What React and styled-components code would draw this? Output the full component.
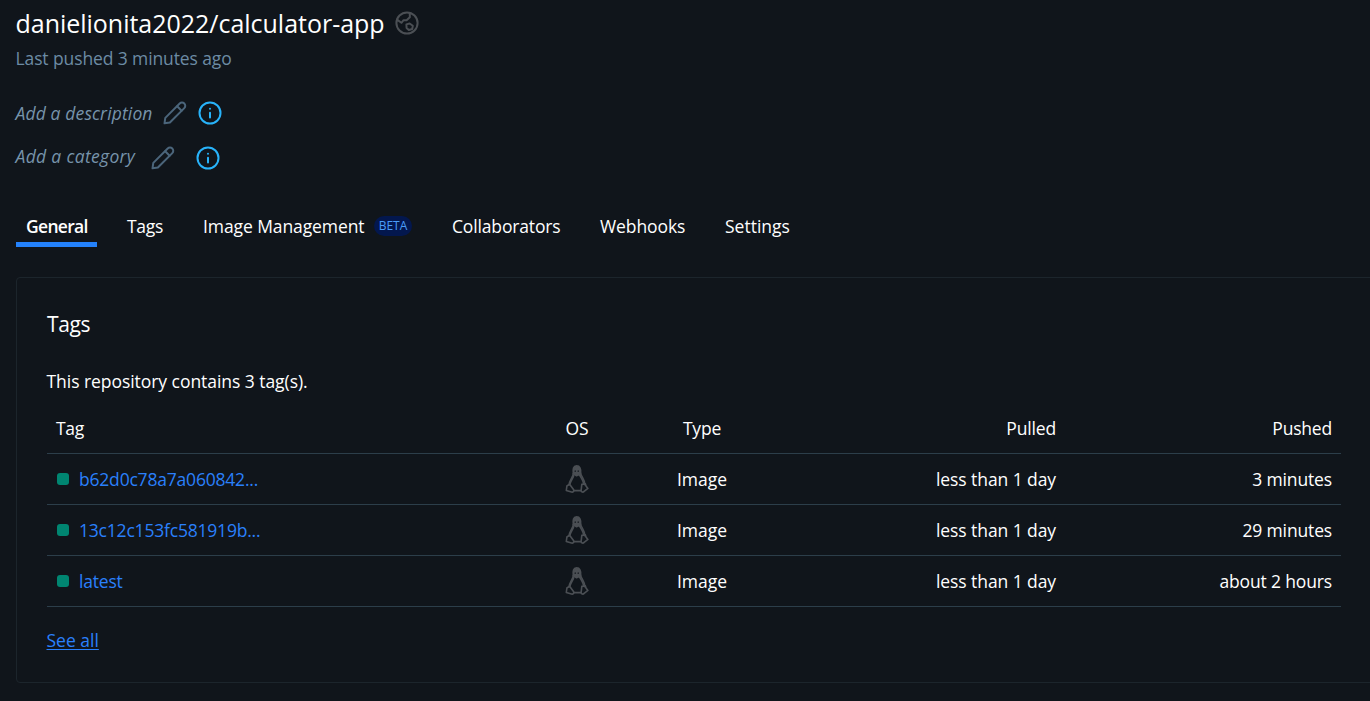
import React from 'react';
import styled, { createGlobalStyle } from 'styled-components';

const GlobalStyle = createGlobalStyle`
  * { box-sizing: border-box; }
  html, body { margin: 0; background: #10151b; overflow: hidden; }
  body {
    font-family: "Open Sans", "Noto Sans", sans-serif;
    font-size: 17.5px;
    line-height: 24px;
    color: #fff;
  }
`;

const Page = styled.main`
  width: 1370px;
  height: 701px;
  padding-left: 16px;
  overflow: hidden;
`;

const Text = styled.span`
  letter-spacing: ${({ $track }) => $track || 0}px;
  white-space: nowrap;
`;

const TitleRow = styled.header`
  display: flex;
  align-items: center;
  gap: 10.5px;
  height: 45px;
`;

const Title = styled.h1`
  margin: 0 0 0 -0.5px;
  font-size: 25px;
  line-height: 34px;
  font-weight: 400;
  letter-spacing: -0.02px;
`;

const Pushed = styled.p`
  margin: 0 0 0 -0.5px;
  height: 26px;
  line-height: 26px;
  color: #6c8ba4;
  letter-spacing: -0.11px;
`;

const Field = styled.div`
  display: flex;
  align-items: center;
  height: ${({ $height }) => $height}px;
  margin-top: ${({ $top }) => $top || 0}px;
  color: #7794ab;
`;

const FieldLabel = styled.em`
  width: ${({ $width }) => $width}px;
  margin: ${({ $lift }) => ($lift ? '0 0 4px' : '1px 0 0')} -0.5px;
  letter-spacing: ${({ $track }) => $track}px;
  white-space: nowrap;
`;

const Icon = styled.svg`
  display: block;
  flex: none;
  width: 24px;
  height: 24px;
  margin-right: ${({ $after }) => $after || 0}px;
  fill: none;
  stroke: ${({ $color }) => $color};
  stroke-width: 2;
  stroke-linecap: round;
  stroke-linejoin: round;
`;

const Tabs = styled.nav`
  display: flex;
  gap: 20px;
  height: 40px;
  margin-top: 27px;
`;

const Tab = styled.a`
  display: flex;
  align-items: center;
  width: ${({ $width }) => $width}px;
  padding: 3px 0 0 10px;
  border-bottom: 5px solid ${({ $active }) => ($active ? '#2482fc' : 'transparent')};
  font-weight: ${({ $active }) => ($active ? 600 : 400)};
`;

const Badge = styled.span`
  display: flex;
  align-items: center;
  justify-content: center;
  width: 38px;
  height: 20px;
  margin: 0 10px 0 auto;
  border-radius: 10px;
  background: #03174e;
  color: #4a9df8;
  font-size: 12px;
  line-height: 20px;
`;

const Panel = styled.section`
  width: 1400px;
  height: 406px;
  margin-top: 30px;
  padding: 30px 30px 0;
  border: 1px solid #1c252c;
  border-radius: 4px;
`;

const PanelTitle = styled.h2`
  margin: 0;
  font-size: 21px;
  line-height: 32px;
  font-weight: 400;
  letter-spacing: -0.4px;
`;

const Summary = styled.p`
  margin: 29px 0 0 -0.5px;
  letter-spacing: -0.05px;
`;

const Table = styled.div`
  width: 1294px;
  margin-top: 10px;
`;

const Row = styled.div`
  display: grid;
  grid-template-columns: 499px 62px 188px 269px 276px;
  align-items: center;
  height: 51px;
  border-bottom: 1px solid #2c3e4a;
`;

const Cell = styled.div`
  display: flex;
  align-items: center;
  justify-content: ${({ $align }) => $align || 'flex-start'};
  padding: 0 9px;
`;

const Status = styled.i`
  width: 12px;
  height: 12px;
  margin: 0 10px 1px 1px;
  border-radius: 3px;
  background: #008571;
`;

const TagLink = styled.a`
  color: #2a80fb;
  letter-spacing: -0.2px;
`;

const SeeAll = styled.a`
  display: inline-block;
  margin: 21px 0 0 -0.5px;
  color: #2a80fb;
  text-decoration: underline;
  text-underline-offset: 2px;
`;

const TuxIcon = styled(Icon)`
  height: 28px;
  margin-bottom: 1px;
  stroke-width: 1.6;
`;

const Globe = () => (
  <Icon viewBox="0 0 24 24" $color="#4b4f54">
    <circle cx="12" cy="12" r="10.6" />
    <path d="M2 8.600l4.400 3.200 2.200-2.600h3l3.200-3V2.200" />
    <path d="M11.400 13.400l3.200-.9 3.200 2.300-.6 3.200-3.400 1-2.200-2z" />
  </Icon>
);

const Pencil = ({ after }) => (
  <Icon viewBox="0 0 24 24" $color="#4b657b" $after={after}>
    <path d="M1.500 22.300l.8-5.400L16.700 2.500a3.150 3.150 0 0 1 4.600 4.600L6.900 21.500z" />
    <path d="M14.200 5.300l4.400 4.400" />
  </Icon>
);

const Info = () => (
  <Icon viewBox="0 0 24 24" $color="#28b3fa">
    <circle cx="12" cy="12" r="10.500" />
    <path d="M12 11.700v4.800M12 7.700v.01" />
  </Icon>
);

const Tux = () => (
  <TuxIcon viewBox="0 0 24 28" $color="#4b4f54">
    <path
      d="M8.300 8.600C7.800 4.200 8.300.9 11.600.9s4.300 2.800 4 6.800l-.5 3-1.600-1.200-1.900 1.200-1.900-1.200z"
      fill="#4b4f54"
    />
    <path d="M8.300 8.600c0 3.300-3.700 6-4.300 11.400M15.600 8c.4 3.500 4.500 6.500 4.400 12" />
    <path d="M8.700 10.500c-.6 2.800-3.200 5.200-3.700 8.500M15 10.500c1 2.500 3.200 4.500 3.600 8" />
    <path d="M4.600 19.200l3.900 5.200c.8 1.500-.3 3-2 2.600L1.300 25.500l.6-4.500z" />
    <path d="M16.800 19.400l-.7 6.200c.3 1.700 2 1.900 3 .8l3.800-3-1.900-2.500-.6-2z" />
    <path d="M8.700 25.600h7.200" />
    <path d="M10.200 5.700v.8M13.200 5.700v.8" stroke="#10151b" strokeWidth="1.100" />
  </TuxIcon>
);

const rows = [
  { tag: 'b62d0c78a7a060842...', pushed: '3 minutes' },
  { tag: '13c12c153fc581919b...', pushed: '29 minutes' },
  { tag: 'latest', pushed: 'about 2 hours' },
];

export default function App() {
  return (
    <Page>
      <GlobalStyle />
      <TitleRow>
        <Title>danielionita2022/calculator-app</Title>
        <Globe />
      </TitleRow>
      <Pushed>Last pushed 3 minutes ago</Pushed>

      <Field $top={19} $height={45}>
        <FieldLabel $width={147.5} $track={0.13}>Add a description</FieldLabel>
        <Pencil after={10.5} />
        <Info />
      </Field>
      <Field $height={45}>
        <FieldLabel $width={135.5} $track={0.32} $lift>Add a category</FieldLabel>
        <Pencil after={20.5} />
        <Info />
      </Field>

      <Tabs>
        <Tab $active $width={81}><Text $track={-0.7}>General</Text></Tab>
        <Tab $width={56}><Text $track={-0.3}>Tags</Text></Tab>
        <Tab $width={229}>
          <Text $track={-0.09}>Image Management</Text>
          <Badge>BETA</Badge>
        </Tab>
        <Tab $width={128}><Text $track={-0.15}>Collaborators</Text></Tab>
        <Tab $width={105}><Text $track={-0.1}>Webhooks</Text></Tab>
        <Tab $width={85}><Text>Settings</Text></Tab>
      </Tabs>

      <Panel>
        <PanelTitle>Tags</PanelTitle>
        <Summary>This repository contains 3 tag(s).</Summary>
        <Table>
          <Row>
            <Cell><Text $track={-0.3}>Tag</Text></Cell>
            <Cell $align="center"><Text>OS</Text></Cell>
            <Cell $align="center"><Text $track={-0.2}>Type</Text></Cell>
            <Cell $align="flex-end"><Text $track={-0.15}>Pulled</Text></Cell>
            <Cell $align="flex-end"><Text $track={-0.2}>Pushed</Text></Cell>
          </Row>
          {rows.map((row) => (
            <Row key={row.tag}>
              <Cell>
                <Status />
                <TagLink>{row.tag}</TagLink>
              </Cell>
              <Cell $align="center"><Tux /></Cell>
              <Cell $align="center"><Text>Image</Text></Cell>
              <Cell $align="flex-end"><Text $track={-0.08}>less than 1 day</Text></Cell>
              <Cell $align="flex-end"><Text $track={-0.15}>{row.pushed}</Text></Cell>
            </Row>
          ))}
        </Table>
        <SeeAll>See all</SeeAll>
      </Panel>
    </Page>
  );
}
